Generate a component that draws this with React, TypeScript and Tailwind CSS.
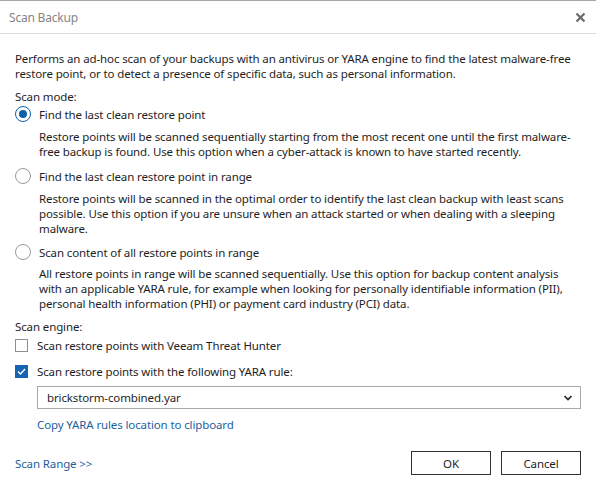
import React from "react";

const font = { fontFamily: '"Noto Sans", "Open Sans", sans-serif' };

function Radio({ checked }: { checked?: boolean }) {
  return (
    <span
      className={
        "flex h-[16px] w-[16px] shrink-0 items-center justify-center rounded-full border bg-white " +
        (checked ? "border-[#0f5fa8]" : "border-[#9a9a9a]")
      }
    >
      {checked && <span className="h-[8px] w-[8px] rounded-full bg-[#0f5fa8]" />}
    </span>
  );
}

function Check({ checked }: { checked?: boolean }) {
  return checked ? (
    <span className="flex h-[13px] w-[13px] shrink-0 items-center justify-center bg-[#1764b2]">
      <svg width="11" height="11" viewBox="0 0 11 11">
        <path d="M2 5.6 L4.4 8 L9 3" fill="none" stroke="white" strokeWidth="1.4" />
      </svg>
    </span>
  ) : (
    <span className="h-[13px] w-[13px] shrink-0 border border-[#8f8f8f] bg-white" />
  );
}

export default function App() {
  return (
    <div
      className="flex h-[490px] w-[596px] flex-col border-t border-[#a6a6a6] bg-white text-[11.5px] leading-[15px] tracking-[-0.12px] text-[#1e1e1e]"
      style={font}
    >
      <div className="flex h-[33px] shrink-0 items-center justify-between border-b border-[#dadada] pl-[9px] pr-[10px]">
        <span className="text-[12px] tracking-[-0.2px] text-[#858585]">Scan Backup</span>
        <svg width="11" height="11" viewBox="0 0 11 11">
          <path d="M1.5 1.5 L9.5 9.5 M9.5 1.5 L1.5 9.5" stroke="#6a6a6a" strokeWidth="2.2" />
        </svg>
      </div>

      <div className="flex flex-col px-[15px] pt-[17px]">
        <div className="whitespace-nowrap">
          <div>Performs an ad-hoc scan of your backups with an antivirus or YARA engine to find the latest malware-free</div>
          <div>restore point, or to detect a presence of specific data, such as personal information.</div>
        </div>

        <div className="mt-[8px]">Scan mode:</div>

        <div className="mt-[2px] flex h-[16px] items-center gap-[8px]">
          <Radio checked />
          <span>Find the last clean restore point</span>
        </div>
        <div className="ml-[24px] mt-[7px] whitespace-nowrap">
          <div>Restore points will be scanned sequentially starting from the most recent one until the first malware-</div>
          <div>free backup is found. Use this option when a cyber-attack is known to have started recently.</div>
        </div>

        <div className="mt-[9px] flex h-[16px] items-center gap-[8px]">
          <Radio />
          <span>Find the last clean restore point in range</span>
        </div>
        <div className="ml-[24px] mt-[7px] whitespace-nowrap">
          <div>Restore points will be scanned in the optimal order to identify the last clean backup with least scans</div>
          <div>possible. Use this option if you are unsure when an attack started or when dealing with a sleeping</div>
          <div>malware.</div>
        </div>

        <div className="mt-[8px] flex h-[16px] items-center gap-[8px]">
          <Radio />
          <span>Scan content of all restore points in range</span>
        </div>
        <div className="ml-[24px] mt-[6px] whitespace-nowrap">
          <div>All restore points in range will be scanned sequentially. Use this option for backup content analysis</div>
          <div>with an applicable YARA rule, for example when looking for personally identifiable information (PII),</div>
          <div>personal health information (PHI) or payment card industry (PCI) data.</div>
        </div>

        <div className="mt-[8px]">Scan engine:</div>

        <div className="mt-[3px] flex h-[16px] items-center gap-[9px]">
          <Check />
          <span>Scan restore points with Veeam Threat Hunter</span>
        </div>
        <div className="mt-[10px] flex h-[16px] items-center gap-[9px]">
          <Check checked />
          <span>Scan restore points with the following YARA rule:</span>
        </div>

        <div className="ml-[22px] mt-[7px] flex h-[23px] items-center justify-between border border-[#a9a9a9] pl-[9px] pr-[7px]">
          <span>brickstorm-combined.yar</span>
          <svg width="10" height="8" viewBox="0 0 10 8">
            <path d="M1.5 2 L5 5.5 L8.5 2" fill="none" stroke="#222" strokeWidth="1.6" />
          </svg>
        </div>

        <div className="ml-[22px] mt-[8px] text-[#1d5f9f]">Copy YARA rules location to clipboard</div>

        <div className="mt-[19px] flex items-center justify-between">
          <span className="text-[#1d5f9f]">Scan Range &gt;&gt;</span>
          <div className="flex gap-[10px]">
            <button className="h-[24px] w-[80px] border border-[#333] bg-white">OK</button>
            <button className="h-[24px] w-[80px] border border-[#333] bg-white">Cancel</button>
          </div>
        </div>
      </div>
    </div>
  );
}
